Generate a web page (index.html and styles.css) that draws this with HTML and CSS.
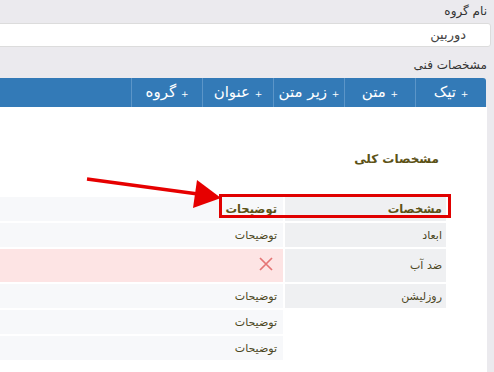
FILE: index.html
```html
<!DOCTYPE html>
<html lang="fa">
<head>
<meta charset="utf-8">
<link rel="stylesheet" href="styles.css">
</head>
<body>
<div class="page">
  <div class="top">
    <div class="lbl">نام گروه</div>
    <div class="input">دوربین</div>
    <div class="lbl lbl-2">مشخصات فنی</div>
  </div>
  <div class="tabs">
    <div class="tab"><span class="plus">+</span> تیک</div>
    <div class="tab"><span class="plus">+</span> متن</div>
    <div class="tab"><span class="plus">+</span> زیر متن</div>
    <div class="tab"><span class="plus">+</span> عنوان</div>
    <div class="tab"><span class="plus">+</span> گروه</div>
  </div>
  <div class="panel">
    <h3 class="heading">مشخصات کلی</h3>
    <div class="spec">
      <div class="cell key head">مشخصات</div>
      <div class="cell val head">توضیحات</div>

      <div class="cell key">ابعاد</div>
      <div class="cell val">توضیحات</div>

      <div class="cell key">ضد آب</div>
      <div class="cell val bad">
        <svg class="x" width="14" height="14" viewBox="0 0 14 14"><path d="M1 1L13 13M13 1L1 13" stroke="#e57474" stroke-width="1.7" fill="none"/></svg>
      </div>

      <div class="cell key">روزلیشن</div>
      <div class="cell val">توضیحات</div>

      <div class="cell empty"></div>
      <div class="cell val">توضیحات</div>

      <div class="cell empty"></div>
      <div class="cell val">توضیحات</div>

      <div class="mark"></div>
      <svg class="arrow" width="150" height="45" viewBox="0 0 150 45">
        <path d="M7 9L118 24" stroke="#e60000" stroke-width="3.5" fill="none"/>
        <polygon points="117,10 141,28 113,38" fill="#e60000"/>
      </svg>
    </div>
  </div>
</div>
</body>
</html>
```

FILE: styles.css
```css
html, body {
  margin: 0;
  padding: 0;
}
body {
  width: 494px;
  height: 372px;
  overflow: hidden;
  background: #ebeaee;
  font-family: "DejaVu Sans", sans-serif;
}
.page {
  direction: rtl;
  margin-left: -20px;
  padding-right: 7px;
}
.top {
  padding-top: 3px;
}
.lbl {
  font-size: 12px;
  line-height: 16px;
  color: #333;
}
.lbl-2 {
  margin-top: 10px;
}
.input {
  margin-top: 4px;
  margin-right: -4px;
  height: 22px;
  line-height: 22px;
  background: #fff;
  border: 1px solid #dcdcdc;
  border-radius: 3px;
  padding-right: 24px;
  font-size: 13px;
  color: #444;
}
.tabs {
  margin-top: 5px;
  margin-right: 1px;
  height: 29px;
  background: #337ab7;
  border-radius: 0 3px 0 0;
  display: flex;
}
.tab {
  width: 70px;
  border-left: 1px solid #5b95c8;
  color: #fff;
  font-size: 15px;
  line-height: 29px;
  text-align: center;
}
.plus {
  font-size: 9px;
}
.panel {
  background: #fff;
  padding: 43px 41px 12px 0;
}
.heading {
  margin: 0 7px 29px 0;
  font-size: 12px;
  line-height: 18px;
  font-weight: bold;
  color: #5c5216;
}
.spec {
  position: relative;
  display: grid;
  grid-template-columns: 161px 1fr;
  grid-template-rows: 24px 24px 33px;
  grid-auto-rows: 24px;
  gap: 2px;
}
.cell {
  font-size: 11px;
  color: #4b4622;
  display: flex;
  align-items: center;
  padding-right: 4px;
}
.key {
  background: #eff0f2;
}
.val {
  background: #f7f8fa;
  padding-right: 6px;
}
.head {
  font-weight: bold;
  color: #5c5216;
  font-size: 11.5px;
}
.bad {
  background: #fde4e4;
  padding-right: 10px;
  padding-bottom: 3px;
}
.empty {
  background: transparent;
}
.mark {
  position: absolute;
  left: 239px;
  right: -5px;
  top: -3px;
  height: 24px;
  box-sizing: border-box;
  border: 3px solid #e00000;
}
.arrow {
  position: absolute;
  left: 100px;
  top: -27px;
}
```
